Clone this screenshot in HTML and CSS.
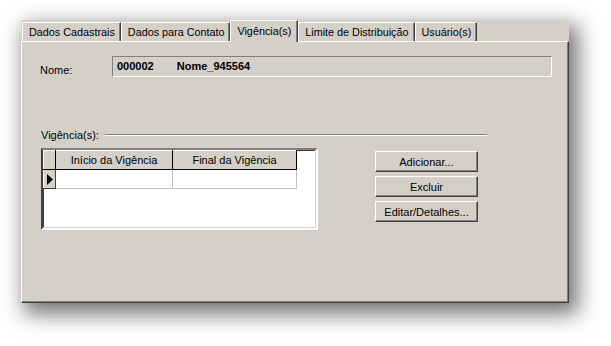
FILE: index.html
```html
<!DOCTYPE html>
<html lang="pt">
<head>
  <meta charset="UTF-8" />
  <title>Vigência(s)</title>
  <link rel="stylesheet" href="styles.css">
</head>
<body>

  <div class="window">
    <div class="tabs">
      <div class="tab">Dados Cadastrais</div>
      <div class="tab">Dados para Contato</div>
      <div class="tab active">Vigência(s)</div>
      <div class="tab">Limite de Distribuição</div>
      <div class="tab">Usuário(s)</div>
    </div>

    <div class="page">
      <div class="name-row">
        <span class="name-label">Nome:</span>
        <div class="name-field">
          <span class="code">000002</span>
          <span>Nome_945564</span>
        </div>
      </div>

      <div class="group">
        <div class="group-title">
          <span>Vigência(s):</span>
          <div class="group-line"></div>
        </div>

        <div class="group-body">
          <div class="grid">
            <table>
              <tr>
                <th class="indicator"></th>
                <th class="col1">Início da Vigência</th>
                <th class="col2">Final da Vigência</th>
              </tr>
              <tr>
                <td class="indicator current">
                  <svg width="6" height="11" viewBox="0 0 6 11"><path d="M0 0 L6 5.5 L0 11 Z" fill="#000"/></svg>
                </td>
                <td></td>
                <td></td>
              </tr>
            </table>
          </div>

          <div class="actions">
            <button class="btn">Adicionar...</button>
            <button class="btn">Excluir</button>
            <button class="btn">Editar/Detalhes...</button>
          </div>
        </div>
      </div>
    </div>
  </div>

</body>
</html>
```

FILE: styles.css
```css
:root {
  --face: #d4d0c8;
  --shade: #808080;
  --dark: #404040;
  --light: #ffffff;
}

body {
  margin: 0;
  padding-bottom: 43px;
  background-color: #ffffff;
  font-family: "Liberation Sans", Arial, sans-serif;
  font-size: 11px;
  color: #000;
}

.window {
  margin: 20px 0 0 21px;
  width: 548px;
  height: 283px;
  background-color: var(--face);
  box-shadow: 6px 8px 20px 3px rgba(0, 0, 0, 0.55);
  display: flex;
  flex-direction: column;
}

/* tab strip */
.tabs {
  display: flex;
  align-items: flex-end;
  height: 21px;
  padding-left: 1px;
  position: relative;
  z-index: 1;
  font-size: 10.8px;
}

.tab {
  height: 18px;
  line-height: 18px;
  padding: 0 5px 0 6px;
  border-top: 1px solid var(--light);
  border-left: 1px solid var(--light);
  border-right: 1px solid var(--dark);
  box-shadow: inset -1px 0 0 var(--shade);
  white-space: nowrap;
}

.tab.active {
  height: 21px;
  line-height: 20px;
  margin-bottom: -1px;
  padding: 0 6px;
  background-color: var(--face);
}

/* tab page */
.page {
  flex: 1;
  border-top: 1px solid var(--light);
  border-left: 1px solid var(--light);
  border-right: 1px solid var(--dark);
  border-bottom: 1px solid var(--dark);
  box-shadow: inset -1px -1px 0 var(--shade);
  padding: 14px 16px 0 18px;
}

.name-row {
  display: flex;
  align-items: flex-start;
}

.name-label {
  width: 72px;
  padding-top: 8px;
}

.name-field {
  flex: 1;
  height: 19px;
  line-height: 18px;
  padding-left: 4px;
  border-top: 1px solid var(--shade);
  border-left: 1px solid var(--shade);
  border-right: 1px solid var(--light);
  border-bottom: 1px solid var(--light);
  font-weight: bold;
}

.code {
  margin-right: 20px;
}

/* group box */
.group {
  margin-top: 52px;
  padding-left: 1px;
}

.group-title {
  display: flex;
  align-items: center;
  gap: 6px;
  width: 446px;
}

.group-line {
  flex: 1;
  border-top: 1px solid var(--shade);
  border-bottom: 1px solid var(--light);
}

.group-body {
  display: flex;
  gap: 57px;
  margin-top: 7px;
}

.grid {
  width: 273px;
  height: 78px;
  background-color: #fff;
  border-top: 2px solid var(--shade);
  border-left: 2px solid var(--dark);
  border-right: 2px solid var(--light);
  border-bottom: 2px solid var(--light);
  box-shadow: inset -1px -1px 0 var(--face), inset 1px 1px 0 var(--dark);
}

table {
  border-collapse: collapse;
  table-layout: fixed;
}

th {
  height: 18px;
  padding: 0;
  font-weight: normal;
  background-color: var(--face);
  border-top: 1px solid var(--light);
  border-left: 1px solid var(--light);
  border-right: 1px solid #000;
  border-bottom: 1px solid #000;
}

th.indicator {
  width: 11px;
}

th.col1 {
  width: 116px;
}

th.col2 {
  width: 123px;
}

td {
  height: 18px;
  padding: 0;
  border-right: 1px solid #c0c0c0;
  border-bottom: 1px solid #c0c0c0;
}

td.current {
  background-color: var(--face);
  border-top: 1px solid var(--light);
  border-left: 1px solid var(--light);
  border-right: 1px solid var(--dark);
  border-bottom: 1px solid var(--dark);
  text-align: center;
  vertical-align: middle;
  line-height: 0;
}

.actions {
  display: flex;
  flex-direction: column;
  gap: 4px;
  margin-top: 3px;
}

.btn {
  width: 103px;
  height: 21px;
  padding: 0;
  font-family: inherit;
  font-size: 11px;
  color: #000;
  background-color: var(--face);
  border-top: 1px solid var(--light);
  border-left: 1px solid var(--light);
  border-right: 1px solid var(--dark);
  border-bottom: 1px solid var(--dark);
  box-shadow: inset -1px -1px 0 var(--shade);
  cursor: pointer;
}
```
